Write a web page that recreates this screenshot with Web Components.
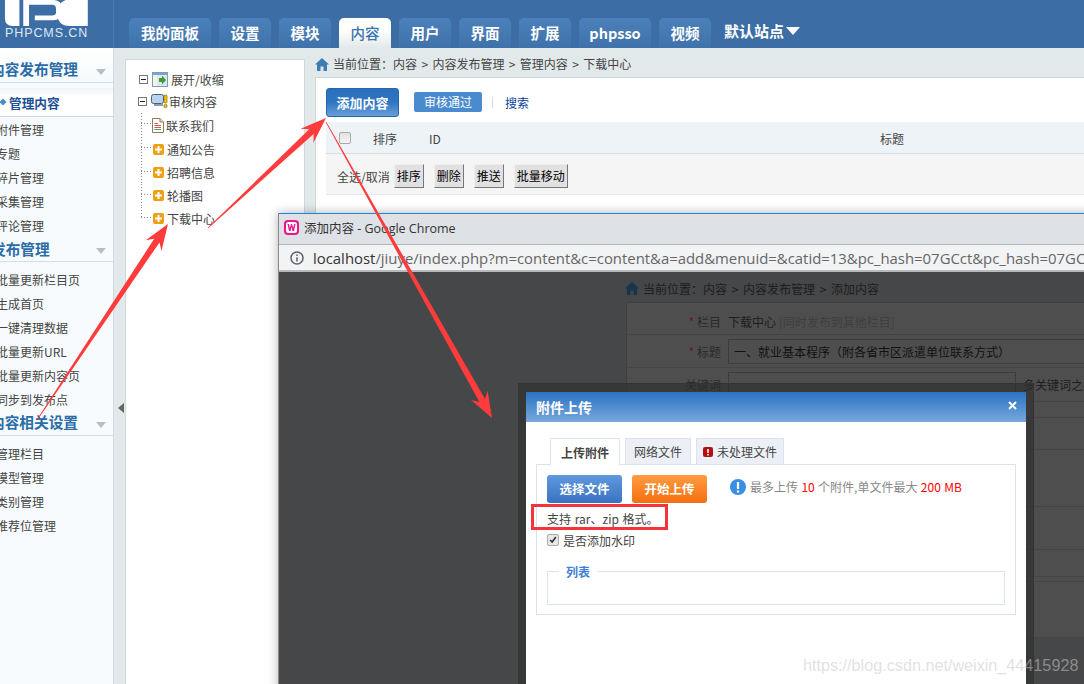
<!DOCTYPE html>
<html lang="zh">
<head>
<meta charset="utf-8">
<title>PHPCMS</title>
<style>
html,body{margin:0;padding:0;overflow:hidden;}
body{width:1084px;height:684px;position:relative;font-family:"Noto Sans CJK SC","Liberation Sans",sans-serif;font-size:12px;color:#444;background:#e2e9ea;}
</style>
</head>
<body>

<pc-header>
  <pc-tab w="82">我的面板</pc-tab>
  <pc-tab w="52">设置</pc-tab>
  <pc-tab w="52">模块</pc-tab>
  <pc-tab w="52" active>内容</pc-tab>
  <pc-tab w="52">用户</pc-tab>
  <pc-tab w="52">界面</pc-tab>
  <pc-tab w="52">扩展</pc-tab>
  <pc-tab w="72">phpsso</pc-tab>
  <pc-tab w="52">视频</pc-tab>
</pc-header>

<pc-shell>
  <pc-sidebar slot="sidebar">
    <pc-menu-head>内容发布管理</pc-menu-head>
    <pc-menu-active>管理内容</pc-menu-active>
    <pc-menu-item>附件管理</pc-menu-item>
    <pc-menu-item>专题</pc-menu-item>
    <pc-menu-item>碎片管理</pc-menu-item>
    <pc-menu-item>采集管理</pc-menu-item>
    <pc-menu-item>评论管理</pc-menu-item>
    <pc-menu-head indent="-9">发布管理</pc-menu-head>
    <pc-menu-item>批量更新栏目页</pc-menu-item>
    <pc-menu-item>生成首页</pc-menu-item>
    <pc-menu-item>一键清理数据</pc-menu-item>
    <pc-menu-item>批量更新URL</pc-menu-item>
    <pc-menu-item>批量更新内容页</pc-menu-item>
    <pc-menu-item>同步到发布点</pc-menu-item>
    <pc-menu-head>内容相关设置</pc-menu-head>
    <pc-menu-item>管理栏目</pc-menu-item>
    <pc-menu-item>模型管理</pc-menu-item>
    <pc-menu-item>类别管理</pc-menu-item>
    <pc-menu-item>推荐位管理</pc-menu-item>
  </pc-sidebar>

  <pc-tree slot="tree">
    <tree-row kind="toggle" h="22">展开/收缩</tree-row>
    <tree-row kind="root" h="23">审核内容</tree-row>
    <tree-row kind="doc" h="24">联系我们</tree-row>
    <tree-row kind="plus" h="24">通知公告</tree-row>
    <tree-row kind="plus" h="23">招聘信息</tree-row>
    <tree-row kind="plus" h="23">轮播图</tree-row>
    <tree-row kind="plus" h="23" last>下载中心</tree-row>
  </pc-tree>

  <pc-content slot="content"></pc-content>
</pc-shell>

<chrome-window>
  <upload-dialog slot="overlay"></upload-dialog>
</chrome-window>

<red-arrow x1="37" y1="420" x2="168" y2="224"></red-arrow>
<red-arrow x1="208" y1="228" x2="326" y2="118"></red-arrow>
<red-arrow x1="326" y1="122" x2="492" y2="418"></red-arrow>

<blog-mark>https://blog.csdn.net/weixin_44415928</blog-mark>

<script>
const CJK = '"Noto Sans CJK SC","Liberation Sans",sans-serif';

class PcHeader extends HTMLElement{
    constructor(){
        super();
        this.attachShadow({mode:'open'});
        this.shadowRoot.innerHTML = `
<style>
:host{display:flex;height:48px;background:#3c6ea5;font-family:${CJK};}
.logo{width:113px;border-right:1px solid #4d7cb0;flex:none;position:relative;}
svg{display:block;}
.cn{display:block;font:12.5px "Liberation Sans",sans-serif;color:#dfe8f2;padding-left:5px;line-height:14px;letter-spacing:.9px;}
.tabs{display:flex;align-items:flex-end;gap:8px;padding-left:15px;}
.site{color:#fff;font-weight:700;font-size:15px;line-height:20px;margin:0 0 7px 5px;align-self:flex-end;display:flex;align-items:center;gap:2px;}
.site i{width:0;height:0;border:7px solid transparent;border-top:8px solid #fff;border-bottom:0;}
</style>
<div class="logo">
  <svg width="112" height="26" viewBox="0 0 112 27">
    <path d="M3 0H18V27H11Q3 27 3 19Z" fill="#fff"/>
    <path d="M22 0V27H28V5H52Q56 5 56 9V13Q56 16 52 16H34V21H53Q62 21 62 13V8Q62 0 53 0Z" fill="#fff"/>
    <path d="M66 0Q56 4 57 14Q58 27 70 27H89V0Z" fill="#fff"/>
  </svg>
  <span class="cn">PHPCMS.CN</span>
</div>
<div class="tabs"><slot></slot><div class="site">默认站点<i></i></div></div>`;
    }
}
customElements.define('pc-header', PcHeader);

class PcTab extends HTMLElement{
    constructor(){
        super();
        this.attachShadow({mode:'open'});
        this.shadowRoot.innerHTML = `
<style>
:host{display:block;height:30px;width:${this.getAttribute('w')}px;text-align:center;border-radius:5px 5px 0 0;background:linear-gradient(#4b80ba,#3f72aa);color:#fff;font-weight:700;font-size:14.5px;line-height:30px;}
:host([active]){background:linear-gradient(#fff 40%,#e2e9ea);color:#3a74ad;font-weight:500;}
</style><slot></slot>`;
    }
}
customElements.define('pc-tab', PcTab);

class PcShell extends HTMLElement{
    constructor(){
        super();
        this.attachShadow({mode:'open'});
        this.shadowRoot.innerHTML = `
<style>
:host{display:flex;height:636px;background:#e2e9ea;overflow:hidden;}
.strip{width:11px;flex:none;display:flex;align-items:center;}
.strip i{display:block;width:0;height:0;margin:0 0 0 4px;border:5px solid transparent;border-right:6px solid #666;border-left:0;position:relative;top:42px;}
</style>
<slot name="sidebar"></slot>
<div class="strip"><i></i></div>
<slot name="tree"></slot>
<slot name="content"></slot>`;
    }
}
customElements.define('pc-shell', PcShell);

class PcSidebar extends HTMLElement{
    constructor(){
        super();
        this.attachShadow({mode:'open'});
        this.shadowRoot.innerHTML = `
<style>:host{display:block;width:113px;flex:none;background:#f7fbfd;border-right:1px solid #cfdbe0;overflow:hidden;}</style><slot></slot>`;
    }
}
customElements.define('pc-sidebar', PcSidebar);

let headCount = 0;
class PcMenuHead extends HTMLElement{
    constructor(){
        super();
        this.attachShadow({mode:'open'});
        const first = headCount++ === 0;
        const indent = this.getAttribute('indent') || '-10';
        // first heading is taller, the others follow a menu list
        this.shadowRoot.innerHTML = `
<style>
:host{display:flex;align-items:flex-end;box-sizing:content-box;height:${first ? 34 : 23}px;border-bottom:1px solid #d3dfe6;margin-bottom:${first ? 5 : 6}px;color:#2b6ca8;font-weight:700;font-size:14.67px;position:relative;background:${first ? 'linear-gradient(#fff,#f5fafc)' : 'transparent'};}
span{flex:1;white-space:nowrap;margin-left:${indent}px;line-height:22px;padding-bottom:${indent === '-9' ? 1 : 2}px;}
i{width:0;height:0;border:5.5px solid transparent;border-top:6px solid #b3bfc5;border-bottom:0;margin:0 7px 7px 0;}
</style><span><slot></slot></span><i></i>`;
    }
}
customElements.define('pc-menu-head', PcMenuHead);

class PcMenuActive extends HTMLElement{
    constructor(){
        super();
        this.attachShadow({mode:'open'});
        this.shadowRoot.innerHTML = `
<style>
:host{display:flex;align-items:center;height:28px;background:linear-gradient(#f1f4f5,#fff 30%);border-bottom:1px solid #cfdbe0;margin-bottom:1px;color:#1c4f96;font-weight:700;font-size:12.7px;}
i{width:6px;height:6px;background:#4d8cc5;transform:rotate(45deg) scale(.85);margin:0 3px 0 0;flex:none;}
</style><i></i><slot></slot>`;
    }
}
customElements.define('pc-menu-active', PcMenuActive);

class PcMenuItem extends HTMLElement{
    constructor(){
        super();
        this.attachShadow({mode:'open'});
        this.shadowRoot.innerHTML = `
<style>:host{display:block;height:24px;line-height:24px;margin-left:-4px;white-space:nowrap;color:#444;font-size:12px;}</style><slot></slot>`;
    }
}
customElements.define('pc-menu-item', PcMenuItem);

class PcTree extends HTMLElement{
    constructor(){
        super();
        this.attachShadow({mode:'open'});
        this.shadowRoot.innerHTML = `
<style>:host{display:block;box-sizing:border-box;width:180px;flex:none;margin-top:11px;padding-top:8px;background:#fff;border:1px solid #cfd9dc;border-bottom:0;}</style><slot></slot>`;
    }
}
customElements.define('pc-tree', PcTree);

const TREE_ICONS = {
    toggle:`<svg width="16" height="15" viewBox="0 0 16 15"><rect x=".5" y=".5" width="15" height="14" fill="#dbe9ee" stroke="#7d9cb8"/><rect x="1" y="1" width="14" height="2" fill="#7fa3cc"/><rect x="1" y="3" width="4" height="11" fill="#f2f5e6"/><path d="M7 6h3V3.5L14 8l-4 4.500V10H7z" fill="#3f9a3a"/></svg>`,
    root:`<svg width="17" height="17" viewBox="0 0 17 17"><rect x=".5" y="1.500" width="12" height="9" rx="2" fill="#b9d3ee" stroke="#4b5f7e"/><rect x="3" y="11" width="9" height="2" fill="#8d9ab0"/><rect x="13" y="2" width="3" height="8" rx="1" fill="#f2c400" stroke="#7a6400" stroke-width=".6"/><circle cx="14.500" cy="13" r="1.700" fill="#f2c400" stroke="#7a6400" stroke-width=".6"/></svg>`,
    doc:`<svg width="12" height="15" viewBox="0 0 12 15"><path d="M.5.5H8L11.500 4V14.500H.5z" fill="#fff" stroke="#8f7d55"/><path d="M8 .5V4h3.500" fill="#efe6cc" stroke="#8f7d55"/><path d="M2.500 5.500H6M2.500 7.500H9M2.500 9.500H9" stroke="#d9534f"/><path d="M2.500 11.500H9" stroke="#4c9a50"/></svg>`,
    plus:`<svg width="11" height="11" viewBox="0 0 11 11"><rect width="11" height="11" rx="2" fill="#eea010"/><path d="M4.500 2h2v2.500H9v2H6.500V9h-2V6.500H2v-2h2.500z" fill="#fff"/></svg>`
};

class TreeRow extends HTMLElement{
    constructor(){
        super();
        this.attachShadow({mode:'open'});
        const kind = this.getAttribute('kind');
        const h = this.getAttribute('h');
        const box = `<svg class="box" width="9" height="9" viewBox="0 0 9 9"><rect x=".5" y=".5" width="8" height="8" fill="#fff" stroke="#777"/><path d="M2 4.500H7" stroke="#222"/></svg>`;
        const gaps = {toggle:[0,3], root:[0,1], doc:[1,2], plus:[2,3]}[kind];
        const lead = (kind === 'toggle' || kind === 'root') ? box
            : `<i class="elbow ${this.hasAttribute('last') ? 'last' : ''}"></i>`;
        this.shadowRoot.innerHTML = `
<style>
:host{display:flex;align-items:center;height:${h}px;white-space:nowrap;color:#444;font-size:12px;padding-left:${kind === 'toggle' ? 13 : kind === 'root' ? 12 : 15}px;}
svg{flex:none;display:block;}
.box{margin-right:4px;}
.ico{margin:0 ${gaps[1]}px 0 ${gaps[0]}px;display:block;}
.elbow{flex:none;align-self:stretch;width:10px;background-image:repeating-linear-gradient(#888 0 1px,transparent 1px 3px),repeating-linear-gradient(90deg,#888 0 1px,transparent 1px 3px);background-repeat:no-repeat;background-size:1px 100%,10px 1px;background-position:0 0,0 45%;}
.elbow.last{background-size:1px 45%,10px 1px;}
</style>${lead}<span class="ico">${TREE_ICONS[kind]}</span><slot></slot>`;
    }
}
customElements.define('tree-row', TreeRow);

class PcButton extends HTMLElement{
    constructor(){
        super();
        this.attachShadow({mode:'open'});
        this.shadowRoot.innerHTML = `
<style>
:host{display:block;box-sizing:border-box;height:24px;padding:0 2px;line-height:22px;border:1px solid;border-color:#eee #777 #777 #eee;background:#e1e1e1;color:#000;font-size:12px;white-space:nowrap;}
</style><slot></slot>`;
    }
}
customElements.define('pc-button', PcButton);

class PcContent extends HTMLElement{
    constructor(){
        super();
        this.attachShadow({mode:'open'});
        this.shadowRoot.innerHTML = `
<style>
:host{display:block;flex:1;min-width:0;margin-left:10px;font-family:${CJK};font-size:12px;color:#444;}
.crumb{height:29px;display:flex;align-items:flex-end;gap:4px;line-height:24px;padding-bottom:1px;box-sizing:border-box;white-space:nowrap;word-spacing:1.7px;}
.crumb svg{margin-bottom:5px;}
.panel{height:607px;box-sizing:border-box;background:#fff;border:1px solid #cfd9dc;border-width:1px 0 0 1px;padding-left:10px;}
.bar{height:44px;box-sizing:border-box;padding-top:4px;display:flex;align-items:center;}
.add{box-sizing:border-box;width:73px;height:29px;border:1px solid #2a66ad;border-radius:3px;background:linear-gradient(#2a6fbd,#2f76c2 50%,#6a9fd8);color:#fff;font-weight:700;font-size:13px;line-height:27px;text-align:center;}
.pass{width:68px;height:20px;margin-left:15px;background:#4a8bd0;border-radius:2px;color:#fff;line-height:20px;text-align:center;}
.sep{width:1px;height:11px;background:#e5d9df;margin:0 12px 0 10px;}
.find{color:#0c3f99;}
.thead{height:32px;box-sizing:border-box;background:#eef3f7;border-bottom:1px solid #d5dee3;display:grid;grid-template-columns:14px 47px 56px 451px 40px;align-items:center;}
.thead span{line-height:20px;margin-top:3px;white-space:nowrap;}
.cb{width:12px;height:12px;box-sizing:border-box;border:1px solid #aaa;border-radius:2px;background:linear-gradient(#e2e2e2,#f4f4f4);margin-left:13px;}
.tfoot{height:41px;box-sizing:border-box;background:#f5f5f5;border-bottom:1px solid #e8e8e8;display:flex;align-items:center;padding:4px 0 0 11px;}
.gap{width:10px;}
</style>
<div class="crumb">
  <svg width="14" height="13" viewBox="0 0 14 13"><path d="M7 0L14 6.500H12V13H8.500V8.500H5.500V13H2V6.500H0z" fill="#3f7cb3"/></svg>
  <span>当前位置：内容 &gt; 内容发布管理 &gt; 管理内容 &gt; 下载中心</span>
</div>
<div class="panel">
  <div class="bar">
    <div class="add">添加内容</div>
    <div class="pass">审核通过</div>
    <i class="sep"></i>
    <span class="find">搜索</span>
  </div>
  <div class="thead">
    <div class="cb"></div>
    <span style="margin-left:33px">排序</span>
    <span style="margin-left:42px">ID</span>
    <i></i>
    <span style="margin-left:-14px">标题</span>
  </div>
  <div class="tfoot">
    <span style="white-space:nowrap;margin-right:4px">全选/取消</span>
    <pc-button>排序</pc-button><i class="gap"></i>
    <pc-button>删除</pc-button><i class="gap"></i>
    <pc-button>推送</pc-button><i class="gap"></i>
    <pc-button>批量移动</pc-button>
  </div>
</div>`;
    }
}
customElements.define('pc-content', PcContent);

class ChromeWindow extends HTMLElement{
    constructor(){
        super();
        this.attachShadow({mode:'open'});
        this.shadowRoot.innerHTML = `
<style>
:host{display:block;position:absolute;left:278px;top:213px;width:900px;height:480px;box-shadow:0 0 10px rgba(0,0,0,.3);border-top:1px solid #1a86e0;border-left:1px solid #8a8a8a;box-sizing:border-box;font-family:${CJK};}
.title{height:26px;padding:0 0 4px 5px;background:#dee1e6;display:flex;align-items:center;gap:5px;font:12.5px "Open Sans","Noto Sans CJK SC",sans-serif;color:#333;white-space:nowrap;}
.addr{background:#f2f3f5;border-top:1px solid #b4b6ba;border-bottom:2px solid #b9babd;height:25px;display:flex;align-items:center;gap:9px;padding-left:11px;white-space:nowrap;font:14.9px "Open Sans",sans-serif;color:#666;}
.addr b{font-weight:400;color:#333;}
.page{position:relative;height:420px;background:#464748;padding-left:347px;color:#1d1d1d;font-size:12px;}
.crumb{height:30px;box-sizing:border-box;padding-top:2px;display:flex;align-items:center;gap:4px;white-space:nowrap;margin-left:-1px;word-spacing:2px;}
.form{border:1px solid #3f3f3f;border-width:1px 0 0 1px;background:#4e4e4e;width:600px;}
.row{display:flex;align-items:center;border-bottom:1px solid #444;white-space:nowrap;position:relative;}
.lab{width:94px;text-align:right;margin-right:7px;color:#2b2b2b;flex:none;}
.lab em{color:#6e1a1a;font-style:normal;}
.inp{box-sizing:border-box;border:1px solid #3d3d3d;height:25px;line-height:23px;padding-left:5px;}
.mute{color:#3f3f3f;}
</style>
<div class="title">
  <svg width="15" height="15" viewBox="0 0 15 15"><rect width="15" height="15" rx="4" fill="#f0148c"/><rect x="2" y="2" width="11" height="11" rx="2.500" fill="#fff"/><path d="M3.500 4L5 11H6.500L7.500 7L8.500 11H10L11.500 4H10L9.200 8L8 4H7L5.800 8L5 4z" fill="#f0148c"/></svg>
  <span>添加内容 - Google Chrome</span>
</div>
<div class="addr">
  <svg width="14" height="14" viewBox="0 0 14 14"><circle cx="7" cy="7" r="6" fill="none" stroke="#5f6368" stroke-width="1.500"/><path d="M7 6.200V10.500M7 3.500V5" stroke="#5f6368" stroke-width="1.500"/></svg>
  <span><b>localhost</b>/jiuye/index.php?m=content&amp;c=content&amp;a=add&amp;menuid=&amp;catid=13&amp;pc_hash=07GCct&amp;pc_hash=07GCct</span>
</div>
<div class="page">
  <div class="crumb">
    <svg width="14" height="13" viewBox="0 0 14 13"><path d="M7 0L14 6.500H12V13H8.500V8.500H5.500V13H2V6.500H0z" fill="#16354f"/></svg>
    <span>当前位置：内容 &gt; 内容发布管理 &gt; 添加内容</span>
  </div>
  <div class="form">
    <div class="row" style="height:32px;box-sizing:border-box;padding-top:5px"><span class="lab"><em>*</em> 栏目</span><span>下载中心 <span class="mute">[同时发布到其他栏目]</span></span></div>
    <div class="row" style="height:32px"><span class="lab"><em>*</em> 标题</span><span class="inp" style="width:400px;color:#111">一、就业基本程序（附各省市区派遣单位联系方式）</span></div>
    <div class="row" style="height:33px"><span class="lab">关键词</span><span class="inp" style="width:288px"></span><span style="margin-left:7px">多关键词之间用空格隔开</span></div>
    <div class="row" style="height:15px"></div>
    <div class="row" style="height:31px"></div>
    <div class="row" style="height:56px"></div>
    <div class="row" style="height:42px"></div>
    <div class="row" style="height:26px"></div>
    <div class="row" style="height:4px"></div>
    <div class="row" style="height:55px"></div>
  </div>
  <slot name="overlay"></slot>
</div>`;
    }
}
customElements.define('chrome-window', ChromeWindow);

class UploadDialog extends HTMLElement{
    constructor(){
        super();
        this.attachShadow({mode:'open'});
        this.shadowRoot.innerHTML = `
<style>
:host{display:block;position:absolute;left:239px;top:111px;width:516px;height:330px;box-sizing:border-box;padding:8px 7px 0;background:rgba(45,45,45,.62);border:1px solid #333;border-bottom:0;font-family:${CJK};font-size:12px;color:#444;}
.dlg{background:#fff;height:100%;}
.head{height:30px;background:linear-gradient(#2a72c2,#78a8dc);display:flex;justify-content:space-between;align-items:center;padding:0 9px 0 10px;color:#fff;font-weight:700;font-size:14px;}
.head svg{display:block;margin-bottom:4px;}
.body{padding:16px 10px 0;}
.tabs{display:flex;gap:5px;padding-left:14px;height:27px;position:relative;z-index:1;}
.tab{box-sizing:border-box;height:26px;border:1px solid #dde3ee;border-bottom:0;background:#ecf0f6;line-height:26px;white-space:nowrap;display:flex;align-items:center;justify-content:center;gap:4px;padding-top:1px;}
.tab.on{height:27px;background:#fff;font-weight:700;}
.box{box-sizing:border-box;height:151px;margin-top:-1px;border:1px solid #dde3ee;padding:10px 10px 0;position:relative;}
.acts{display:flex;align-items:center;height:28px;}
.btn{width:75px;height:28px;border-radius:3px;color:#fff;font-weight:700;line-height:28px;text-align:center;font-size:12.5px;margin-right:10px;}
.blue{background:linear-gradient(#5f99de,#3a72c0);}
.orange{background:linear-gradient(#ff9c42,#f56f0e);}
.tip{display:flex;align-items:center;gap:4px;margin-left:13px;margin-top:-5px;color:#888;white-space:nowrap;word-spacing:.7px;}
.tip b{color:#f00;font-weight:400;}
.support{margin-top:3px;height:26px;line-height:26px;white-space:nowrap;color:#444;word-spacing:1px;}
.mark{position:absolute;left:-6px;top:39px;width:137px;height:26px;box-sizing:border-box;border:3px solid #f5333a;}
.water{display:flex;align-items:center;gap:4px;height:18px;margin-top:-1px;white-space:nowrap;}
.cb{width:12px;height:12px;box-sizing:border-box;border:1px solid #aaa;border-radius:2px;background:#e8e8e8;display:block;}
.set{box-sizing:border-box;height:34px;margin-top:22px;border:1px solid #dde3ee;position:relative;}
.set span{position:absolute;left:11px;top:-7px;padding:0 7px;background:#fff;color:#3f7fdc;font-weight:700;line-height:14px;}
</style>
<div class="dlg">
  <div class="head"><span>附件上传</span><svg width="9" height="9" viewBox="0 0 9 9"><path d="M1 1L8 8M8 1L1 8" stroke="#fff" stroke-width="2"/></svg></div>
  <div class="body">
    <div class="tabs">
      <div class="tab on" style="width:70px">上传附件</div>
      <div class="tab" style="width:66px">网络文件</div>
      <div class="tab" style="width:88px"><svg width="10" height="10" viewBox="0 0 10 10"><rect width="10" height="10" rx="2" fill="#b50f0f"/><path d="M5 2V6M5 7V8.500" stroke="#fff" stroke-width="1.600"/></svg>未处理文件</div>
    </div>
    <div class="box">
      <div class="acts">
        <div class="btn blue">选择文件</div>
        <div class="btn orange">开始上传</div>
        <div class="tip"><svg width="16" height="16" viewBox="0 0 16 16"><circle cx="8" cy="8" r="8" fill="#3b8ee6"/><path d="M8 3V10M8 11.500V13.500" stroke="#fff" stroke-width="2.200"/></svg><span>最多上传 <b>10</b> 个附件,单文件最大 <b>200 MB</b></span></div>
      </div>
      <div class="support">支持 rar、zip 格式。</div>
      <i class="mark"></i>
      <div class="water"><svg class="cb" width="12" height="12" viewBox="0 0 12 12"><path d="M2.500 6L5 8.500L9.500 2.500" fill="none" stroke="#333" stroke-width="2"/></svg>是否添加水印</div>
      <div class="set"><span>列表</span></div>
    </div>
  </div>
</div>`;
    }
}
customElements.define('upload-dialog', UploadDialog);

class RedArrow extends HTMLElement{
    constructor(){
        super();
        this.attachShadow({mode:'open'});
        const [x1,y1,x2,y2] = ['x1','y1','x2','y2'].map(a => +this.getAttribute(a));
        const len = Math.hypot(x2 - x1, y2 - y1);
        const ux = (x2 - x1) / len, uy = (y2 - y1) / len;
        const at = (d, w) => (x1 + ux * d - uy * w).toFixed(1) + ',' + (y1 + uy * d + ux * w).toFixed(1);
        const pts = [at(0,.4), at(len-20,3.2), at(len-26,9.5), at(len,0), at(len-26,-9.5), at(len-20,-3.2), at(0,-.4)].join(' ');
        this.shadowRoot.innerHTML = `
<style>:host{display:block;position:absolute;left:0;top:0;width:0;height:0;}svg{position:absolute;left:0;top:0;overflow:visible;}</style>
<svg width="1084" height="684"><polygon points="${pts}" fill="#ff3b3b"/></svg>`;
    }
}
customElements.define('red-arrow', RedArrow);

class BlogMark extends HTMLElement{
    constructor(){
        super();
        this.attachShadow({mode:'open'});
        this.shadowRoot.innerHTML = `
<style>:host{display:block;position:absolute;left:803px;top:654px;font:16.2px/22px "Liberation Sans",sans-serif;color:rgba(200,200,200,.55);white-space:nowrap;}</style><slot></slot>`;
    }
}
customElements.define('blog-mark', BlogMark);
</script>
</body>
</html>
